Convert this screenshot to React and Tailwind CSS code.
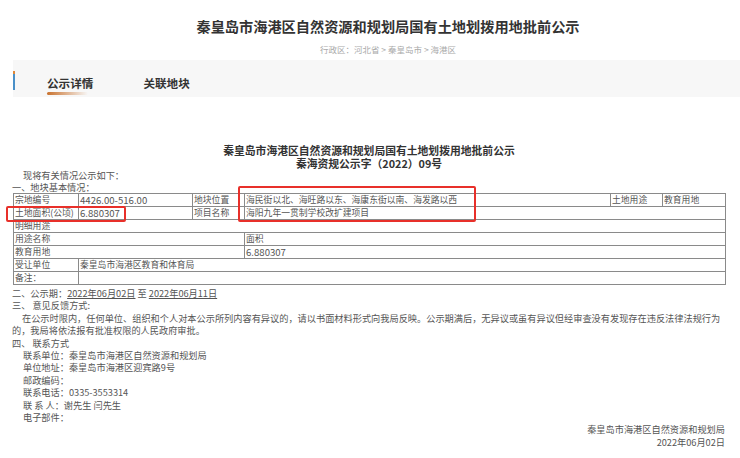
import React from "react";

const FONT = {fontFamily: '"Noto Sans CJK SC", "Noto Sans", sans-serif'};

export default function App() {
    const cell = "border border-[#8a8a8a] h-[13px] px-[1px] py-0 leading-[12px] whitespace-nowrap overflow-hidden align-middle";

    return (
        <div className="w-[740px] h-[458px] bg-white overflow-hidden text-[#555]" style={FONT}>
            {/* 页头 */}
            <div className="pl-[36px] pt-[16px] text-center">
                <h1 className="text-[14.2px] leading-[20px] font-bold text-[#333]">
                    秦皇岛市海港区自然资源和规划局国有土地划拨用地批前公示
                </h1>
                <div className="mt-[7px] text-[8.5px] leading-[12px] text-[#aaa]">
                    行政区：河北省 &gt; 秦皇岛市 &gt; 海港区
                </div>
            </div>

            {/* 标签栏 */}
            <div className="ml-[13px] mt-[5px] h-[37px] bg-[#f7f7f7] flex items-start">
                <div className="mt-[11px] w-[2px] h-[19px] bg-[#4a90c8] flex flex-col">
                    <div className="h-[3px] bg-[#e0893a]"/>
                </div>
                <div className="ml-[32px] mt-[15px] flex flex-col">
                    <span className="block text-[11.6px] leading-[16px] font-bold text-[#333]">公示详情</span>
                    <div className="mt-[1px] w-[41px] h-[3px] rounded-full bg-gradient-to-r from-[#c9722e] to-transparent"/>
                </div>
                <div className="ml-[50px] mt-[15px] flex flex-col">
                    <span className="block text-[11.6px] leading-[16px] font-bold text-[#333]">关联地块</span>
                </div>
            </div>

            {/* 正文 */}
            <div className="ml-[12px] w-[714px] mt-[47px] text-[9.2px]">
                <div className="text-center font-bold text-[#333] text-[10.8px] leading-[13px]">
                    秦皇岛市海港区自然资源和规划局国有土地划拨用地批前公示
                </div>
                <div className="text-center font-bold text-[#333] text-[10.8px] leading-[12px]">
                    秦海资规公示字（2022）09号
                </div>
                <div className="leading-[12px] pl-[11px]">现将有关情况公示如下：</div>
                <div className="leading-[12px]">一、地块基本情况：</div>

                <div className="relative ml-[1px] w-[712px]">
                    <table className="w-[712px] table-fixed border-collapse text-[8.8px] text-[#555]">
                        <colgroup>
                            <col className="w-[65px]"/>
                            <col className="w-[114px]"/>
                            <col className="w-[52px]"/>
                            <col className="w-[366px]"/>
                            <col className="w-[52px]"/>
                            <col className="w-[63px]"/>
                        </colgroup>
                        <tbody>
                        <tr>
                            <td className={cell}>宗地编号</td>
                            <td className={cell + " text-[9.6px]"}>4426.00-516.00</td>
                            <td className={cell}>地块位置</td>
                            <td className={cell}>海民街以北、海旺路以东、海康东街以南、海发路以西</td>
                            <td className={cell}>土地用途</td>
                            <td className={cell}>教育用地</td>
                        </tr>
                        <tr>
                            <td className={cell}>土地面积(公顷)</td>
                            <td className={cell + " text-[9.6px]"}>6.880307</td>
                            <td className={cell}>项目名称</td>
                            <td className={cell} colSpan={3}>海阳九年一贯制学校改扩建项目</td>
                        </tr>
                        <tr>
                            <td className={cell} colSpan={6}>明细用途</td>
                        </tr>
                        <tr>
                            <td className={cell} colSpan={3}>用途名称</td>
                            <td className={cell} colSpan={3}>面积</td>
                        </tr>
                        <tr>
                            <td className={cell} colSpan={3}>教育用地</td>
                            <td className={cell + " text-[9.6px]"} colSpan={3}>6.880307</td>
                        </tr>
                        <tr>
                            <td className={cell}>受让单位</td>
                            <td className={cell} colSpan={5}>秦皇岛市海港区教育和体育局</td>
                        </tr>
                        <tr>
                            <td className={cell}>备注：</td>
                            <td className={cell} colSpan={5}></td>
                        </tr>
                        </tbody>
                    </table>
                    {/* 标注框 */}
                    <div className="absolute left-[-7px] top-[13px] w-[120px] h-[16px] border-2 border-[#e8302a] rounded-[2px]"/>
                    <div className="absolute left-[225px] top-[-7px] w-[238px] h-[36px] border-2 border-[#e8302a] rounded-[2px]"/>
                </div>

                <div className="mt-[2px] leading-[12.4px] whitespace-nowrap">
                    <div>二、公示期：<span className="underline">2022年06月02日</span> 至 <span className="underline">2022年06月11日</span></div>
                    <div>三、 意见反馈方式:</div>
                    <div className="pl-[10px]">在公示时限内，任何单位、组织和个人对本公示所列内容有异议的，请以书面材料形式向我局反映。公示期满后，无异议或虽有异议但经审查没有发现存在违反法律法规行为</div>
                    <div>的，我局将依法报有批准权限的人民政府审批。</div>
                    <div>四、 联系方式</div>
                    <div className="pl-[11px]">
                        <div>联系单位：秦皇岛市海港区自然资源和规划局</div>
                        <div>单位地址：秦皇岛市海港区迎宾路9号</div>
                        <div>邮政编码：</div>
                        <div>联系电话：0335-3553314</div>
                        <div>联 系 人：谢先生 闫先生</div>
                        <div>电子部件：</div>
                    </div>
                    <div className="text-right pr-[1px]">
                        <div>秦皇岛市海港区自然资源和规划局</div>
                        <div>2022年06月02日</div>
                    </div>
                </div>
            </div>
        </div>
    );
}
